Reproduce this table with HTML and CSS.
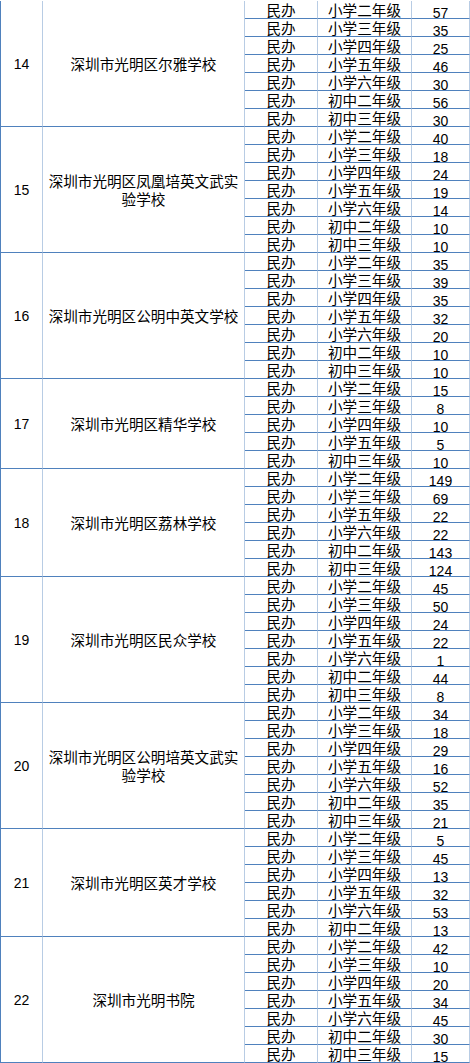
FILE: index.html
```html
<!DOCTYPE html>
<html lang="zh-CN">
<head>
<meta charset="utf-8">
<title>深圳市光明区民办学校学位</title>
<link rel="stylesheet" href="styles.css">
</head>
<body>
<div class="sheet">
  <div class="tbl">
    <div class="c num span7">14</div>
    <div class="c name span7">深圳市光明区尔雅学校</div>
    <div class="c t">民办</div><div class="c t">小学二年级</div><div class="c d">57</div>
    <div class="c t">民办</div><div class="c t">小学三年级</div><div class="c d">35</div>
    <div class="c t">民办</div><div class="c t">小学四年级</div><div class="c d">25</div>
    <div class="c t">民办</div><div class="c t">小学五年级</div><div class="c d">46</div>
    <div class="c t">民办</div><div class="c t">小学六年级</div><div class="c d">30</div>
    <div class="c t">民办</div><div class="c t">初中二年级</div><div class="c d">56</div>
    <div class="c t">民办</div><div class="c t">初中三年级</div><div class="c d">30</div>

    <div class="c num span7">15</div>
    <div class="c name span7">深圳市光明区凤凰培英文武实验学校</div>
    <div class="c t">民办</div><div class="c t">小学二年级</div><div class="c d">40</div>
    <div class="c t">民办</div><div class="c t">小学三年级</div><div class="c d">18</div>
    <div class="c t">民办</div><div class="c t">小学四年级</div><div class="c d">24</div>
    <div class="c t">民办</div><div class="c t">小学五年级</div><div class="c d">19</div>
    <div class="c t">民办</div><div class="c t">小学六年级</div><div class="c d">14</div>
    <div class="c t">民办</div><div class="c t">初中二年级</div><div class="c d">10</div>
    <div class="c t">民办</div><div class="c t">初中三年级</div><div class="c d">10</div>

    <div class="c num span7">16</div>
    <div class="c name span7">深圳市光明区公明中英文学校</div>
    <div class="c t">民办</div><div class="c t">小学二年级</div><div class="c d">35</div>
    <div class="c t">民办</div><div class="c t">小学三年级</div><div class="c d">39</div>
    <div class="c t">民办</div><div class="c t">小学四年级</div><div class="c d">35</div>
    <div class="c t">民办</div><div class="c t">小学五年级</div><div class="c d">32</div>
    <div class="c t">民办</div><div class="c t">小学六年级</div><div class="c d">20</div>
    <div class="c t">民办</div><div class="c t">初中二年级</div><div class="c d">10</div>
    <div class="c t">民办</div><div class="c t">初中三年级</div><div class="c d">10</div>

    <div class="c num span5">17</div>
    <div class="c name span5">深圳市光明区精华学校</div>
    <div class="c t">民办</div><div class="c t">小学二年级</div><div class="c d">15</div>
    <div class="c t">民办</div><div class="c t">小学三年级</div><div class="c d">8</div>
    <div class="c t">民办</div><div class="c t">小学四年级</div><div class="c d">10</div>
    <div class="c t">民办</div><div class="c t">小学五年级</div><div class="c d">5</div>
    <div class="c t">民办</div><div class="c t">初中三年级</div><div class="c d">10</div>

    <div class="c num span6">18</div>
    <div class="c name span6">深圳市光明区荔林学校</div>
    <div class="c t">民办</div><div class="c t">小学二年级</div><div class="c d">149</div>
    <div class="c t">民办</div><div class="c t">小学三年级</div><div class="c d">69</div>
    <div class="c t">民办</div><div class="c t">小学五年级</div><div class="c d">22</div>
    <div class="c t">民办</div><div class="c t">小学六年级</div><div class="c d">22</div>
    <div class="c t">民办</div><div class="c t">初中二年级</div><div class="c d">143</div>
    <div class="c t">民办</div><div class="c t">初中三年级</div><div class="c d">124</div>

    <div class="c num span7">19</div>
    <div class="c name span7">深圳市光明区民众学校</div>
    <div class="c t">民办</div><div class="c t">小学二年级</div><div class="c d">45</div>
    <div class="c t">民办</div><div class="c t">小学三年级</div><div class="c d">50</div>
    <div class="c t">民办</div><div class="c t">小学四年级</div><div class="c d">24</div>
    <div class="c t">民办</div><div class="c t">小学五年级</div><div class="c d">22</div>
    <div class="c t">民办</div><div class="c t">小学六年级</div><div class="c d">1</div>
    <div class="c t">民办</div><div class="c t">初中二年级</div><div class="c d">44</div>
    <div class="c t">民办</div><div class="c t">初中三年级</div><div class="c d">8</div>

    <div class="c num span7">20</div>
    <div class="c name span7">深圳市光明区公明培英文武实验学校</div>
    <div class="c t">民办</div><div class="c t">小学二年级</div><div class="c d">34</div>
    <div class="c t">民办</div><div class="c t">小学三年级</div><div class="c d">18</div>
    <div class="c t">民办</div><div class="c t">小学四年级</div><div class="c d">29</div>
    <div class="c t">民办</div><div class="c t">小学五年级</div><div class="c d">16</div>
    <div class="c t">民办</div><div class="c t">小学六年级</div><div class="c d">52</div>
    <div class="c t">民办</div><div class="c t">初中二年级</div><div class="c d">35</div>
    <div class="c t">民办</div><div class="c t">初中三年级</div><div class="c d">21</div>

    <div class="c num span6">21</div>
    <div class="c name span6">深圳市光明区英才学校</div>
    <div class="c t">民办</div><div class="c t">小学二年级</div><div class="c d">5</div>
    <div class="c t">民办</div><div class="c t">小学三年级</div><div class="c d">45</div>
    <div class="c t">民办</div><div class="c t">小学四年级</div><div class="c d">13</div>
    <div class="c t">民办</div><div class="c t">小学五年级</div><div class="c d">32</div>
    <div class="c t">民办</div><div class="c t">小学六年级</div><div class="c d">53</div>
    <div class="c t">民办</div><div class="c t">初中二年级</div><div class="c d">13</div>

    <div class="c num span7">22</div>
    <div class="c name span7">深圳市光明书院</div>
    <div class="c t">民办</div><div class="c t">小学二年级</div><div class="c d">42</div>
    <div class="c t">民办</div><div class="c t">小学三年级</div><div class="c d">10</div>
    <div class="c t">民办</div><div class="c t">小学四年级</div><div class="c d">20</div>
    <div class="c t">民办</div><div class="c t">小学五年级</div><div class="c d">34</div>
    <div class="c t">民办</div><div class="c t">小学六年级</div><div class="c d">45</div>
    <div class="c t">民办</div><div class="c t">初中二年级</div><div class="c d">30</div>
    <div class="c t">民办</div><div class="c t">初中三年级</div><div class="c d">15</div>
  </div>
</div>
</body>
</html>
```

FILE: styles.css
```css
html, body {
  margin: 0;
  padding: 0;
  background: #ffffff;
}

.sheet {
  padding-top: 1px;
  width: 470px;
}

.tbl {
  display: grid;
  grid-template-columns: 42px 202px 73px 94px 58px;
  grid-auto-rows: 18px;
  border-left: 1px solid #4f81bd;
  width: 470px;
  box-sizing: border-box;
  font-family: "Noto Sans CJK SC", "Noto Sans CJK TC", sans-serif;
  font-size: 14.6px;
  color: #000000;
}

.c {
  box-sizing: border-box;
  border-right: 1px solid #b8cce4;
  border-bottom: 1px solid #4f81bd;
  text-align: center;
  white-space: nowrap;
  overflow: visible;
}

.t {
  line-height: 18px;
}

.d {
  font-family: "Liberation Sans", Arial, sans-serif;
  font-size: 14px;
  line-height: 24px;
}

.num {
  display: flex;
  align-items: center;
  justify-content: center;
  font-family: "Liberation Sans", Arial, sans-serif;
  font-size: 14px;
}

.name {
  display: flex;
  align-items: center;
  justify-content: center;
  padding: 0 2px;
  white-space: normal;
  line-height: 18px;
}

.span5 { grid-row: span 5; }
.span6 { grid-row: span 6; }
.span7 { grid-row: span 7; }
```
